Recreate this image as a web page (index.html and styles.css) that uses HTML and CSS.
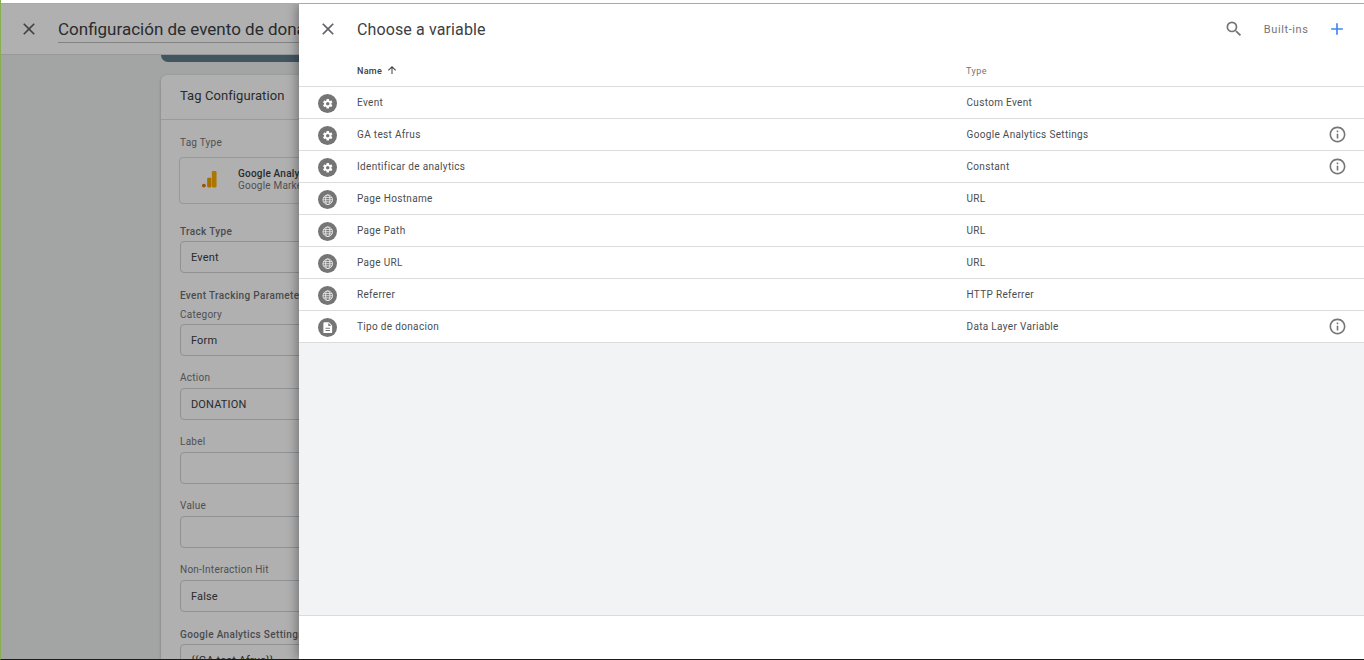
FILE: index.html
```html
<!DOCTYPE html>
<html lang="en">
<head>
<meta charset="utf-8">
<title>Choose a variable</title>
<link rel="stylesheet" href="styles.css">
</head>
<body>
<div class="frame">
  <div class="top-strip"></div>
  <div class="app">
    <header class="app-header">
      <svg class="app-close" viewBox="0 0 24 24"><path d="M19 6.41 17.59 5 12 10.59 6.41 5 5 6.41 10.59 12 5 17.59 6.41 19 12 13.41 17.59 19 19 17.59 13.41 12z"/></svg>
      <div class="app-title">Configuración de evento de donación</div>
    </header>
    <main class="canvas">
      <div class="column">
        <div class="dark-bar"></div>
        <section class="card">
          <div class="card-head">Tag Configuration</div>
          <div class="card-body">
            <div class="small-label first">Tag Type</div>
            <div class="type-box">
              <svg class="ga-icon" viewBox="0 0 16 18"><rect x="10.500" y="0" width="5" height="17.500" rx="1.200" fill="#f9ab00"/><rect x="5.500" y="7" width="4.500" height="10.500" rx="1.200" fill="#f0a000"/><circle cx="2" cy="15.500" r="2" fill="#e37400"/></svg>
              <div class="type-text">
                <div class="type-name">Google Analytics: Universal Analytics</div>
                <div class="type-sub">Google Marketing Platform</div>
              </div>
            </div>
            <div class="strong-label track">Track Type</div>
            <div class="field tight">Event</div>
            <div class="strong-label params">Event Tracking Parameters</div>
            <div class="small-label category">Category</div>
            <div class="field tight">Form</div>
            <div class="small-label gap">Action</div>
            <div class="field">DONATION</div>
            <div class="small-label gap">Label</div>
            <div class="field"></div>
            <div class="small-label gap">Value</div>
            <div class="field"></div>
            <div class="small-label gap">Non-Interaction Hit</div>
            <div class="field">False</div>
            <div class="strong-label settings">Google Analytics Settings</div>
            <div class="field tight">{{GA test Afrus}}</div>
          </div>
        </section>
      </div>
    </main>
    <div class="scrim"></div>
    <aside class="drawer">
      <div class="drawer-head">
        <svg class="drawer-close" viewBox="0 0 24 24"><path d="M19 6.41 17.59 5 12 10.59 6.41 5 5 6.41 10.59 12 5 17.59 6.41 19 12 13.41 17.59 19 19 17.59 13.41 12z"/></svg>
        <h1 class="drawer-title">Choose a variable</h1>
        <svg class="search" viewBox="0 0 24 24"><path d="M15.500 14h-.79l-.28-.27A6.470 6.470 0 0 0 16 9.500 6.500 6.500 0 1 0 9.500 16c1.610 0 3.090-.59 4.230-1.570l.27.28v.79l5 4.990L20.490 19l-4.990-5zm-6 0C7.010 14 5 11.990 5 9.500S7.010 5 9.500 5 14 7.010 14 9.500 11.990 14 9.500 14z"/></svg>
        <span class="builtins">Built-ins</span>
        <svg class="plus" viewBox="0 0 24 24"><path d="M19 13h-6v6h-2v-6H5v-2h6V5h2v6h6v2z"/></svg>
      </div>
      <div class="col-head">
        <div class="col-name">Name
          <svg class="sort" viewBox="0 0 24 24"><path d="M4 12l1.410 1.410L11 7.830V20h2V7.830l5.580 5.590L20 12l-8-8-8 8z"/></svg>
        </div>
        <div class="col-type">Type</div>
      </div>
      <div class="rows">
        <div class="row">
          <span class="badge"><svg viewBox="0 0 24 24"><use href="#gear"/></svg></span>
          <span class="name">Event</span><span class="type">Custom Event</span>
        </div>
        <div class="row">
          <span class="badge"><svg viewBox="0 0 24 24"><use href="#gear"/></svg></span>
          <span class="name">GA test Afrus</span><span class="type">Google Analytics Settings</span>
          <svg class="info" viewBox="0 0 24 24"><use href="#info"/></svg>
        </div>
        <div class="row">
          <span class="badge"><svg viewBox="0 0 24 24"><use href="#gear"/></svg></span>
          <span class="name">Identificar de analytics</span><span class="type">Constant</span>
          <svg class="info" viewBox="0 0 24 24"><use href="#info"/></svg>
        </div>
        <div class="row">
          <span class="badge"><svg viewBox="0 0 24 24"><use href="#globe"/></svg></span>
          <span class="name">Page Hostname</span><span class="type">URL</span>
        </div>
        <div class="row">
          <span class="badge"><svg viewBox="0 0 24 24"><use href="#globe"/></svg></span>
          <span class="name">Page Path</span><span class="type">URL</span>
        </div>
        <div class="row">
          <span class="badge"><svg viewBox="0 0 24 24"><use href="#globe"/></svg></span>
          <span class="name">Page URL</span><span class="type">URL</span>
        </div>
        <div class="row">
          <span class="badge"><svg viewBox="0 0 24 24"><use href="#globe"/></svg></span>
          <span class="name">Referrer</span><span class="type">HTTP Referrer</span>
        </div>
        <div class="row">
          <span class="badge"><svg viewBox="0 0 24 24"><use href="#doc"/></svg></span>
          <span class="name">Tipo de donacion</span><span class="type">Data Layer Variable</span>
          <svg class="info" viewBox="0 0 24 24"><use href="#info"/></svg>
        </div>
      </div>
      <div class="empty"></div>
      <div class="drawer-foot"></div>
    </aside>
  </div>
</div>
<svg class="defs" aria-hidden="true">
  <symbol id="gear" viewBox="0 0 24 24"><path fill="#fff" fill-rule="evenodd" d="M19.430 12.980c.04-.32.07-.64.07-.98s-.03-.66-.07-.98l2.110-1.650c.19-.15.24-.42.12-.64l-2-3.460c-.12-.22-.39-.3-.61-.22l-2.490 1c-.52-.4-1.080-.73-1.690-.98l-.38-2.650A.488.488 0 0 0 14 2h-4c-.25 0-.46.18-.49.420l-.38 2.650c-.61.25-1.170.59-1.690.98l-2.490-1c-.23-.09-.49 0-.61.22l-2 3.460c-.13.22-.07.49.12.64l2.110 1.650c-.04.32-.07.65-.07.98s.03.66.07.98l-2.110 1.650c-.19.15-.24.42-.12.64l2 3.460c.12.22.39.3.61.22l2.490-1c.52.4 1.080.73 1.690.98l.38 2.650c.03.24.24.42.49.42h4c.25 0 .46-.18.49-.42l.38-2.650c.61-.25 1.170-.59 1.690-.98l2.490 1c.23.09.49 0 .61-.22l2-3.460c.12-.22.07-.49-.12-.64l-2.110-1.650zM12 15.500c-1.930 0-3.500-1.570-3.500-3.500s1.570-3.500 3.500-3.500 3.500 1.570 3.500 3.500-1.570 3.500-3.500 3.500z"/></symbol>
  <symbol id="globe" viewBox="0 0 24 24"><g fill="none" stroke="#fff" stroke-width="1.500"><circle cx="12" cy="12" r="10"/><ellipse cx="12" cy="12" rx="4.500" ry="10"/><path d="M2 12h20M3.200 7.500h17.600M3.200 16.500h17.600"/></g></symbol>
  <symbol id="doc" viewBox="3 1.500 18 21"><path fill="#fff" d="M14 2H6c-1.100 0-2 .9-2 2v16c0 1.100.9 2 2 2h12c1.100 0 2-.9 2-2V8l-6-6zm2 16H8v-2h8v2zm0-4H8v-2h8v2zm-3-5V3.500L18.500 9H13z"/></symbol>
  <symbol id="info" viewBox="0 0 24 24"><path d="M11 7h2v2h-2zm0 4h2v6h-2zm1-9C6.480 2 2 6.480 2 12s4.480 10 10 10 10-4.480 10-10S17.520 2 12 2zm0 18c-4.410 0-8-3.590-8-8s3.590-8 8-8 8 3.590 8 8-3.590 8-8 8z"/></symbol>
</svg>
</body>
</html>
```
FILE: styles.css
```css
* { box-sizing: border-box; }
html, body { margin: 0; height: 100%; overflow: hidden; }
body { font-family: Roboto, "Liberation Sans", sans-serif; background: #fff; color: #212121; }

.frame { height: 660px; display: flex; flex-direction: column; border-left: 1px solid #86b04f; border-bottom: 1px solid #1b1b1b; }
.top-strip { height: 4px; background: #fff; border-bottom: 1px solid #a8a8a8; flex: none; }
.app { position: relative; flex: 1; min-height: 0; overflow: hidden; background: #ecefef; display: flex; flex-direction: column; }

.app-header { flex: none; height: 51px; background: #fff; border-bottom: 1px solid #dadce0; display: flex; align-items: flex-start; padding: 15px 0 0 18px; }
.app-close { width: 20px; height: 20px; fill: #5f6368; flex: none; }
.app-title { margin: -1px 0 0 19px; width: 420px; height: 25px; font-size: 17px; line-height: 22px; white-space: nowrap; color: #3c4043; border-bottom: 1px solid #bdbdbd; overflow: hidden; }

.canvas { flex: 1; min-height: 0; padding-left: 160px; }
.column { width: 640px; }
.dark-bar { height: 7px; background: #607d8b; border-radius: 0 0 8px 8px; }
.card { margin-top: 13px; background: #fff; border-radius: 6px 6px 0 0; box-shadow: 0 1px 3px rgba(0,0,0,.25); }
.card-head { height: 45px; padding: 0 19px; font-size: 13px; line-height: 42px; letter-spacing: .08px; color: #3c4043; border-bottom: 1px solid #e0e0e0; }
.card-body { padding: 0 19px; }

.small-label { font-size: 10px; line-height: 12px; color: #757575; letter-spacing: .25px; }
.small-label.first { padding-top: 17px; }
.small-label.category { margin-top: 7px; }
.small-label.gap { margin-top: 16px; }
.strong-label { font-size: 10px; font-weight: 500; line-height: 12px; color: #6b6e72; letter-spacing: .35px; }
.strong-label.track { margin-top: 22px; }
.strong-label.params { margin-top: 17px; }
.strong-label.settings { margin-top: 17px; }

.type-box { margin: 8px 0 0 -1px; height: 47px; border: 1px solid #dadce0; border-radius: 4px; display: flex; align-items: center; padding: 0 0 2px 22px; }
.ga-icon { width: 15px; height: 17px; flex: none; }
.type-text { margin-left: 21px; width: 62px; overflow: hidden; font-size: 10px; line-height: 12px; white-space: nowrap; letter-spacing: .2px; color: #3c4043; }
.type-name { font-weight: 500; }
.type-sub { color: #757575; }

.field { margin-top: 4px; height: 32px; border: 1px solid #cfd2d6; border-radius: 4px; padding-left: 10px; font-size: 11px; line-height: 32px; letter-spacing: .15px; color: #3c4043; }
.field.tight { margin-top: 3px; }

.scrim { position: absolute; inset: 0; background: rgba(0,0,0,.31); }

.drawer { position: absolute; top: 0; bottom: 0; left: 298px; right: 0; background: #fff; display: flex; flex-direction: column; box-shadow: -2px 0 10px rgba(0,0,0,.35); }
.drawer-head { flex: none; height: 50px; display: flex; align-items: center; padding-left: 19px; }
.drawer-close { width: 20px; height: 20px; fill: #5f6368; flex: none; }
.drawer-title { margin: 0 0 0 19px; font-size: 16px; font-weight: 400; letter-spacing: .12px; color: #3c4043; flex: 1; }
.search { width: 20px; height: 20px; margin-right: .5px; fill: #757575; flex: none; }
.builtins { margin-left: 19.500px; font-size: 11px; font-weight: 400; color: #757575; letter-spacing: .6px; }
.plus { margin: 0 17px 0 18.500px; width: 20px; height: 20px; fill: #4285f4; flex: none; }

.col-head { flex: none; height: 33px; display: flex; align-items: center; padding: 2px 0 0 58px; border-bottom: 1px solid #dadce0; }
.col-name { width: 609px; display: flex; align-items: center; font-size: 9px; font-weight: 500; color: #3c4043; letter-spacing: .3px; }
.sort { width: 12px; height: 12px; margin: -2px 0 0 4px; fill: #3c4043; }
.col-type { font-size: 9px; color: #757575; letter-spacing: .45px; }

.row { height: 32px; display: flex; align-items: center; border-bottom: 1px solid #dadce0; padding-left: 19px; font-size: 10px; letter-spacing: .33px; color: #4a4d50; }
.badge { width: 19px; height: 19px; margin-top: 2px; border-radius: 50%; background: #757575; display: flex; align-items: center; justify-content: center; flex: none; }
.badge svg { width: 11.500px; height: 11.500px; }
.name { margin-left: 20px; width: 609.500px; flex: none; }
.type { flex: 1; }
.info { width: 19px; height: 19px; margin-right: 17px; fill: #757575; flex: none; }

.empty { flex: 1; background: #f1f3f4; }
.drawer-foot { flex: none; height: 44px; background: #fff; border-top: 1px solid #dadce0; }
.defs { position: absolute; width: 0; height: 0; }
```
